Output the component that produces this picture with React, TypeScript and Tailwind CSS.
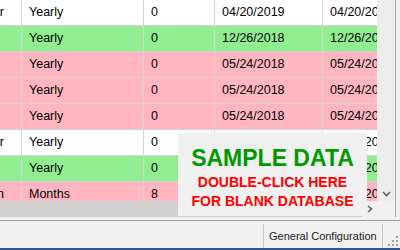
import React from 'react';

type Row = { tone: 'white' | 'green' | 'pink'; lead: string; period: string; n: string; d1: string; d2: string };

const ROWS: Row[] = [
  { tone: 'white', lead: 'Quarter', period: 'Yearly', n: '0', d1: '04/20/2019', d2: '04/20/2019' },
  { tone: 'green', lead: '', period: 'Yearly', n: '0', d1: '12/26/2018', d2: '12/26/2018' },
  { tone: 'pink', lead: '', period: 'Yearly', n: '0', d1: '05/24/2018', d2: '05/24/2018' },
  { tone: 'pink', lead: '', period: 'Yearly', n: '0', d1: '05/24/2018', d2: '05/24/2018' },
  { tone: 'pink', lead: '', period: 'Yearly', n: '0', d1: '05/24/2018', d2: '05/24/2018' },
  { tone: 'white', lead: 'Calendar Year', period: 'Yearly', n: '0', d1: '04/20/2019', d2: '04/20/2019' },
  { tone: 'green', lead: '', period: 'Yearly', n: '0', d1: '12/26/2018', d2: '12/26/2018' },
  { tone: 'pink', lead: 'Maintain', period: 'Months', n: '8', d1: '05/24/2018', d2: '05/24/2018' },
];

const toneBg = { white: 'bg-white', green: 'bg-[#90ee90]', pink: 'bg-[#ffb6c1]' };

const Cell: React.FC<{ w: string; children?: React.ReactNode; last?: boolean }> = ({ w, children, last }) => (
  <div className={`${w} h-full flex items-center pl-[7px] whitespace-nowrap overflow-hidden shrink-0 ${last ? '' : 'border-r border-[#d4d4d4]'}`}>
    {children}
  </div>
);

export default function App() {
  return (
    <div className="w-[400px] h-[250px] bg-[#f0f0f0] relative overflow-hidden flex flex-col font-['Liberation_Sans',Arial,sans-serif] text-black">
      {/* grid + scrollbars */}
      <div className="flex h-[217px] shrink-0">
        <div className="w-[377px] flex flex-col shrink-0">
          <div className="h-[201px] overflow-hidden bg-white text-[12.5px]">
            {ROWS.map((r, i) => (
              <div key={i} className={`flex h-[26px] border-b border-[#d4d4d4] ${toneBg[r.tone]}`}>
                <div className="w-[22px] h-full flex items-center justify-end pr-[17px] overflow-hidden whitespace-nowrap border-r border-[#d4d4d4] shrink-0">
                  <span>{r.lead}</span>
                </div>
                <Cell w="w-[122px]">{r.period}</Cell>
                <Cell w="w-[71px]">{r.n}</Cell>
                <Cell w="w-[108px]">{r.d1}</Cell>
                <Cell w="w-[60px]" last>{r.d2}</Cell>
              </div>
            ))}
          </div>
          {/* horizontal scrollbar */}
          <div className="h-[16px] flex bg-[#f0f0f0]">
            <div className="w-[362px] h-full bg-[#d0d0d0]" />
            <div className="flex-1 flex items-center justify-center">
              <svg width="8" height="8" viewBox="0 0 8 8">
                <path d="M2 1 L5.5 4 L2 7" fill="none" stroke="#606060" strokeWidth="1.6" />
              </svg>
            </div>
          </div>
        </div>
        {/* vertical scrollbar */}
        <div className="w-[18px] flex flex-col shrink-0">
          <div className="h-[201px] flex flex-col justify-end items-center bg-[#ececec] pb-[3px]">
            <svg width="9" height="8" viewBox="0 0 9 8">
              <path d="M1 2 L4.5 5.5 L8 2" fill="none" stroke="#606060" strokeWidth="1.6" />
            </svg>
          </div>
          <div className="flex-1" />
        </div>
        <div className="w-[1px] bg-[#a8a8a8] shrink-0" />
        <div className="flex-1" />
      </div>

      <div className="h-[3px] shrink-0" />
      <div className="h-[1px] bg-[#a0a0a0] shrink-0" />

      {/* status bar */}
      <div className="flex-1 flex items-stretch pt-[3px]">
        <div className="w-[263px]" />
        <div className="w-[1px] bg-[#c8c8c8]" />
        <div className="w-[118px] flex items-center pl-[5px] text-[11px] text-[#1a1a1a] whitespace-nowrap">General Configuration</div>
        <div className="w-[1px] bg-[#c8c8c8]" />
        <div className="flex-1 flex items-end justify-end pr-[2px] pb-[2px]">
          <svg width="10" height="10" viewBox="0 0 10 10" fill="#a0a0a0">
            <rect x="8" y="0" width="2" height="2" />
            <rect x="4" y="4" width="2" height="2" />
            <rect x="8" y="4" width="2" height="2" />
            <rect x="0" y="8" width="2" height="2" />
            <rect x="4" y="8" width="2" height="2" />
            <rect x="8" y="8" width="2" height="2" />
          </svg>
        </div>
      </div>
      <div className="h-[2px] bg-[#2b5797] shrink-0" />

      {/* sample data overlay */}
      <div className="absolute left-[178px] top-[133px] w-[189px] h-[83px] bg-[#f0f0f0] flex flex-col items-center pt-[14px] font-bold leading-none">
        <div className="text-[23px] text-[#009a00]">SAMPLE DATA</div>
        <div className="text-[14px] text-[#ff0000] mt-[5px]">DOUBLE-CLICK HERE</div>
        <div className="text-[14px] text-[#ff0000] mt-[5px]">FOR BLANK DATABASE</div>
      </div>
    </div>
  );
}
